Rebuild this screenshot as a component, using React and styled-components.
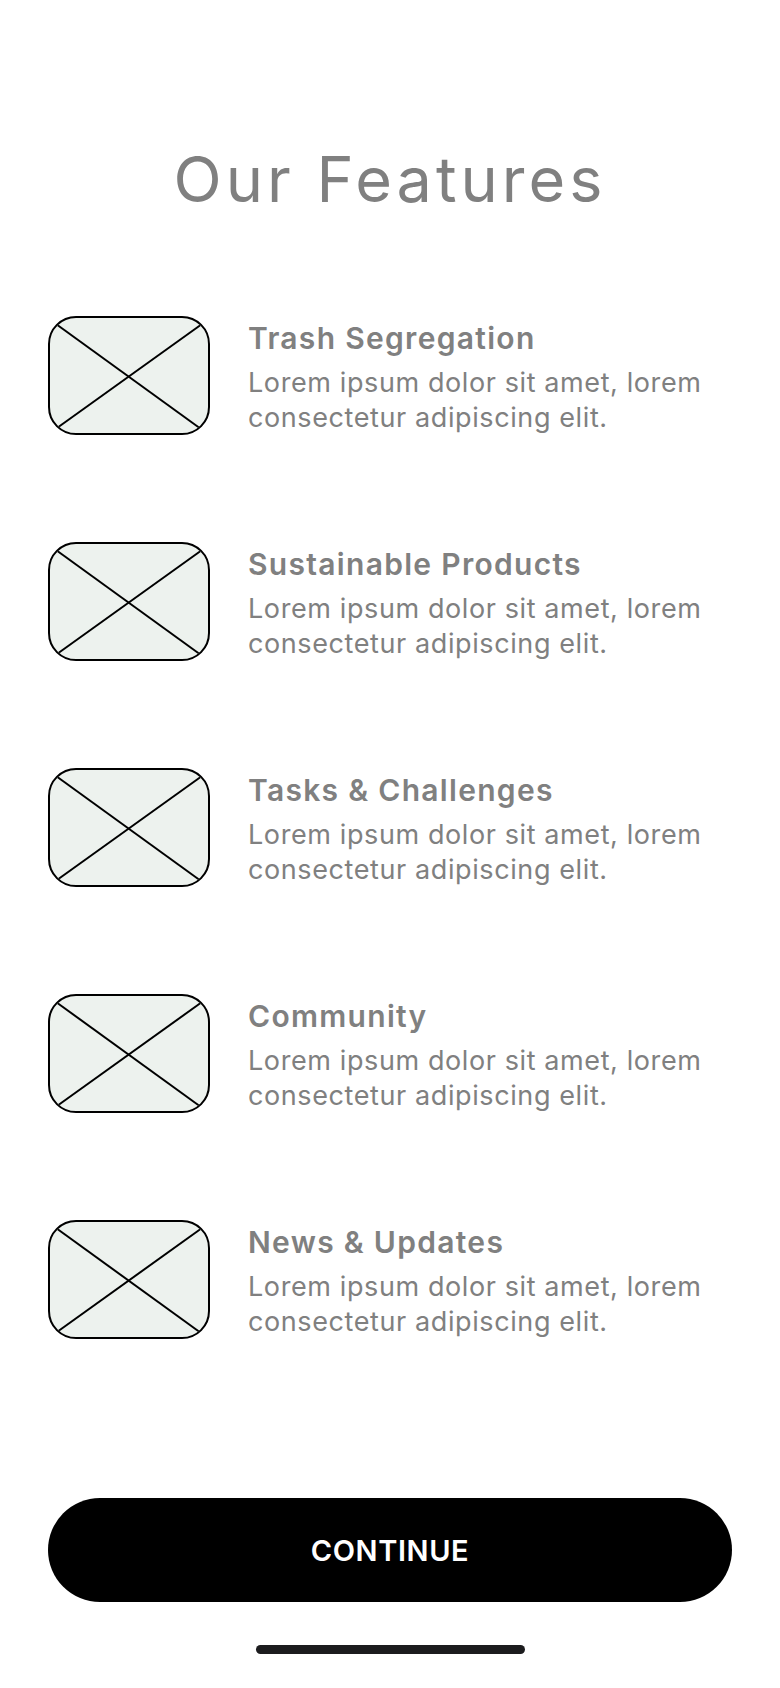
import styled, { createGlobalStyle } from 'styled-components';

const GlobalStyle = createGlobalStyle`
	* {
		box-sizing: border-box;
	}

	body {
		margin: 0;
		background: #ffffff;
		font-family: Inter, 'Noto Sans', sans-serif;
	}
`;

const FEATURES = [
	{ id: 1, title: 'Trash Segregation' },
	{ id: 2, title: 'Sustainable Products' },
	{ id: 3, title: 'Tasks & Challenges' },
	{ id: 4, title: 'Community' },
	{ id: 5, title: 'News & Updates' },
];

const DESCRIPTION = ['Lorem ipsum dolor sit amet, lorem', 'consectetur adipiscing elit.'];

const Page = styled.main`
	display: flex;
	flex-direction: column;
	align-items: center;
	width: 780px;
	height: 1688px;
	padding: 148px 48px 0;
	overflow: hidden;
`;

const Title = styled.h1`
	margin: 0;
	font-size: 63px;
	line-height: 62px;
	font-weight: 400;
	letter-spacing: 4px;
	color: #808080;
`;

const FeatureList = styled.ul`
	display: flex;
	flex-direction: column;
	row-gap: 107px;
	width: 100%;
	margin: 106px 0 0;
	padding: 0;
	list-style: none;
`;

const Row = styled.li`
	display: flex;
	align-items: flex-start;
	column-gap: 38px;
`;

const Placeholder = styled.div`
	flex: none;
	width: 162px;
	height: 119px;
	border: 2px solid #000000;
	border-radius: 28px;
	background: #edf2ee;
	overflow: hidden;

	& svg {
		display: block;
		width: 100%;
		height: 100%;
	}
`;

const TextBlock = styled.div`
	display: flex;
	flex-direction: column;
	padding-top: 4px;

	& .name {
		margin: 0 0 9px;
		font-size: 30px;
		line-height: 36px;
		font-weight: 600;
		letter-spacing: 1.3px;
		color: #808080;
	}

	& .text {
		margin: 0;
		font-size: 27px;
		line-height: 35px;
		font-weight: 400;
		letter-spacing: 0.6px;
		color: #808080;
	}
`;

const ContinueButton = styled.button`
	display: flex;
	align-items: center;
	justify-content: center;
	width: 100%;
	height: 104px;
	margin-top: 159px;
	border: none;
	border-radius: 52px;
	background: #000000;
	color: #ffffff;
	font-family: Inter, 'Noto Sans', sans-serif;
	font-size: 29px;
	font-weight: 600;
	letter-spacing: 0.6px;
	cursor: pointer;
`;

const HomeBar = styled.div`
	width: 269px;
	height: 9px;
	margin-top: 43px;
	border-radius: 5px;
	background: #1c1c1e;
`;

const ImageIcon = () => (
	<svg viewBox="0 0 158 115" preserveAspectRatio="none">
		<line x1="6" y1="6" x2="151" y2="111" stroke="#000" strokeWidth="2" />
		<line x1="152" y1="6" x2="7" y2="110" stroke="#000" strokeWidth="2" />
	</svg>
);

const FeatureRow = ({ feature }) => (
	<Row>
		<Placeholder>
			<ImageIcon />
		</Placeholder>
		<TextBlock>
			<p className="name">{feature.title}</p>
			<p className="text">
				{DESCRIPTION[0]}
				<br />
				{DESCRIPTION[1]}
			</p>
		</TextBlock>
	</Row>
);

export default function App() {
	return (
		<>
			<GlobalStyle />
			<Page>
				<Title>Our Features</Title>
				<FeatureList>
					{FEATURES.map((feature) => (
						<FeatureRow key={feature.id} feature={feature} />
					))}
				</FeatureList>
				<ContinueButton>CONTINUE</ContinueButton>
				<HomeBar />
			</Page>
		</>
	);
}
